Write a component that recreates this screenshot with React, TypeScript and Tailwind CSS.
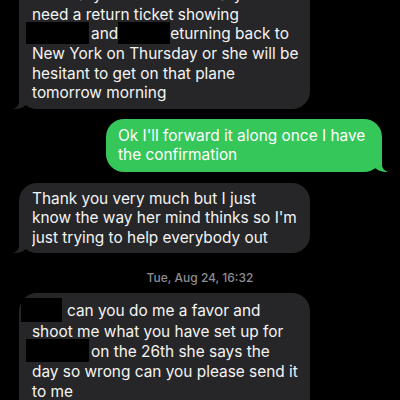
function TailLeft() {
  return (
    <svg className="absolute bottom-0 left-[-7px]" width="20" height="20" viewBox="0 0 20 20">
      <path d="M7 2 V13 Q7 18 1 20 Q9 20.5 14 16 L20 16 L20 2 Z" fill="#262628" />
    </svg>
  )
}

function TailRight() {
  return (
    <svg className="absolute bottom-0 right-[-7px]" width="20" height="20" viewBox="0 0 20 20">
      <path d="M13 2 V13 Q13 18 19 20 Q11 20.5 6 16 L0 16 L0 2 Z" fill="#35c759" />
    </svg>
  )
}

function Redact({ w, h = 22, className = "" }: { w: number; h?: number; className?: string }) {
  return <span className={`inline-block bg-black align-middle ${className}`} style={{ width: w, height: h }} />
}

export default function App() {
  return (
    <div
      className="w-[400px] h-[400px] bg-black overflow-hidden text-[#f4f4f4]"
      style={{ fontFamily: "Inter, 'Liberation Sans', sans-serif" }}
    >
      <div className="flex flex-col mt-[-21px] text-[15.4px] leading-[19.5px] whitespace-nowrap">
        {/* incoming */}
        <div className="relative ml-[19px] w-[291px] rounded-[18px] bg-[#262628] pl-[13px] pr-[12px] py-[6px]">
          she really needs the itinerary but I
          <br />
          need a return ticket showing
          <br />
          <Redact w={63} className="ml-[-6px] mt-[-3px] mr-[2px]" />and<Redact w={52} className="mt-[-3px]" />eturning back to
          <br />
          New York on Thursday or she will be
          <br />
          hesitant to get on that plane
          <br />
          tomorrow morning
          <TailLeft />
        </div>

        {/* outgoing */}
        <div className="relative ml-[106px] mt-[10px] w-[276px] rounded-[18px] bg-[#35c759] px-[12px] py-[7px] text-white">
          Ok I'll forward it along once I have
          <br />
          the confirmation
          <TailRight />
        </div>

        <div className="relative ml-[19px] mt-[11px] w-[291px] rounded-[18px] bg-[#262628] pl-[13px] pr-[12px] py-[6px]">
          Thank you very much but I just
          <br />
          know the way her mind thinks so I'm
          <br />
          just trying to help everybody out
          <TailLeft />
        </div>

        <p className="mt-[17px] mb-[7px] text-center text-[12px] leading-[16px] font-medium text-[#8d8d92]">
          Tue, Aug 24, 16:32
        </p>

        <div className="relative ml-[19px] w-[291px] rounded-[18px] bg-[#262628] pl-[13px] pr-[12px] pt-[8px] pb-[24px]">
          <Redact w={41} h={24} className="ml-[-11px] mt-[-4px] mr-[5px]" />can you do me a favor and
          <br />
          shoot me what you have set up for
          <br />
          <Redact w={63} h={23} className="ml-[-6px] mt-[-3px] mr-[2px]" />on the 26th she says the
          <br />
          day so wrong can you please send it
          <br />
          to me
        </div>
      </div>
    </div>
  )
}
